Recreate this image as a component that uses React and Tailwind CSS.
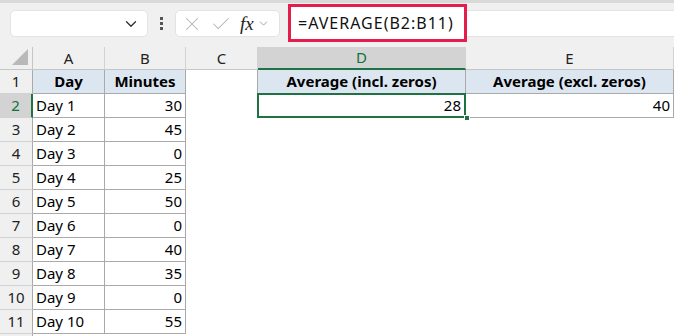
import { ChevronDown, X, Check } from "lucide-react";

const cols = [
  { key: "A", w: 72 },
  { key: "B", w: 81 },
  { key: "C", w: 72 },
  { key: "D", w: 208 },
  { key: "E", w: 208 },
];

const data = [
  ["Day", "Minutes"],
  ["Day 1", "30"],
  ["Day 2", "45"],
  ["Day 3", "0"],
  ["Day 4", "25"],
  ["Day 5", "50"],
  ["Day 6", "0"],
  ["Day 7", "40"],
  ["Day 8", "35"],
  ["Day 9", "0"],
  ["Day 10", "55"],
];

const font = { fontFamily: '"Noto Sans", "Open Sans", sans-serif' };

function FormulaBar() {
  return (
    <div className="h-[47px] bg-[#f0f0f0] border-t-[3px] border-[#d9d9d9] flex items-start pt-[7px] pl-[10px]">
      <div className="w-[138px] h-[27px] bg-white rounded-[5px] border border-[#e3e3e3] flex items-center justify-end pr-[7px]">
        <ChevronDown size={18} strokeWidth={1.8} className="text-[#333]" />
      </div>
      <div className="w-[27px] h-[27px] flex flex-col items-center justify-center gap-[2px]">
        <span className="w-[3px] h-[3px] bg-[#555]" />
        <span className="w-[3px] h-[3px] bg-[#555]" />
        <span className="w-[3px] h-[3px] bg-[#555]" />
      </div>
      <div className="w-[105px] h-[27px] bg-white rounded-[5px] border border-[#e3e3e3] flex items-center pl-[5px]">
        <X size={22} strokeWidth={1.1} className="text-[#b5b5b5]" />
        <Check size={22} strokeWidth={1.1} className="text-[#b5b5b5] ml-[7px]" />
        <span
          className="ml-[8px] text-[19px] italic text-[#222] leading-none"
          style={{ fontFamily: '"Liberation Serif", "DejaVu Serif", serif' }}
        >
          fx
        </span>
        <ChevronDown size={13} strokeWidth={1.4} className="text-[#888] ml-[3px]" />
      </div>
      <div className="flex-1 ml-[8px] -mt-[6px] h-[38px] relative">
        <div className="absolute left-0 right-0 top-[6px] h-[27px] bg-white border-y border-[#e3e3e3]" />
        <div className="absolute left-0 top-0 w-[179px] h-[38px] border-[3px] border-[#e41d4d] bg-white flex items-center pl-[7px]">
          <span className="text-[16px] text-[#111] tracking-[1px]" style={font}>
            =AVERAGE(B2:B11)
          </span>
        </div>
      </div>
    </div>
  );
}

function ColumnHeaders() {
  return (
    <div className="flex h-[23px] bg-[#f0f0f0]">
      <div className="w-[33px] h-full border-r border-b border-[#c6c6c6] relative overflow-hidden">
        <div
          className="absolute right-[4px] bottom-[4px] w-[16px] h-[16px] bg-[#b9b9b9]"
          style={{ clipPath: "polygon(100% 0, 100% 100%, 0 100%)" }}
        />
      </div>
      {cols.map((c) => {
        const active = c.key === "D";
        return (
          <div
            key={c.key}
            style={{ width: c.w, ...font }}
            className={`h-full flex items-center justify-center text-[15px] border-r border-[#d2d2d2] ${
              active
                ? "bg-[#d3d3d3] text-[#11703d] border-b-2 border-b-[#1f7244]"
                : "text-[#222] border-b border-b-[#c6c6c6]"
            }`}
          >
            {c.key}
          </div>
        );
      })}
    </div>
  );
}

function Cell({ w, className = "", children }) {
  return (
    <div style={{ width: w }} className={`h-full flex items-center px-[3px] text-[15px] text-black ${className}`}>
      {children}
    </div>
  );
}

function Row({ n, values }) {
  const activeRow = n === 2;
  const inTable = n <= 11;
  const hdr = n === 1;
  const tb = "border-r border-b border-[#a9a9a9]";
  return (
    <div className="flex h-[24px]" style={font}>
      <div
        className={`w-[33px] h-full flex items-center justify-center text-[15px] border-b border-[#d2d2d2] ${
          activeRow
            ? "bg-[#d3d3d3] text-[#11703d] border-r-2 border-r-[#1f7244]"
            : "bg-[#f0f0f0] text-[#222] border-r border-r-[#a9a9a9]"
        }`}
      >
        {n <= 11 ? n : ""}
      </div>
      <Cell w={72} className={`${inTable ? tb : ""} ${hdr ? "bg-[#dce6f1] font-bold justify-center" : ""}`}>
        {values?.[0]}
      </Cell>
      <Cell w={81} className={`${inTable ? tb : ""} ${hdr ? "bg-[#dce6f1] font-bold justify-center" : "justify-end"}`}>
        {values?.[1]}
      </Cell>
      <Cell w={72} className={n <= 2 ? "border-r border-[#a9a9a9]" : ""} />
      {n === 1 && (
        <>
          <Cell w={208} className={`${tb} bg-[#dce6f1] font-bold justify-center`}>Average (incl. zeros)</Cell>
          <Cell w={208} className={`${tb} bg-[#dce6f1] font-bold justify-center`}>Average (excl. zeros)</Cell>
        </>
      )}
      {n === 2 && (
        <>
          <div style={{ width: 208 }} className="h-full relative">
            <div className="absolute -left-[1px] -top-[1px] w-[209px] h-[25px] border-2 border-[#1f7244] flex items-center justify-end pr-[3px] text-[15px]">
              28
            </div>
            <div className="absolute -right-[4px] -bottom-[3px] w-[6px] h-[6px] bg-[#1f7244] border border-white" />
          </div>
          <Cell w={208} className={`${tb} justify-end`}>40</Cell>
        </>
      )}
    </div>
  );
}

export default function App() {
  const rows = Array.from({ length: 12 }, (_, i) => i + 1);
  return (
    <div className="w-[674px] h-[336px] overflow-hidden bg-white" style={font}>
      <FormulaBar />
      <ColumnHeaders />
      {rows.map((n) => (
        <Row key={n} n={n} values={data[n - 1]} />
      ))}
    </div>
  );
}
